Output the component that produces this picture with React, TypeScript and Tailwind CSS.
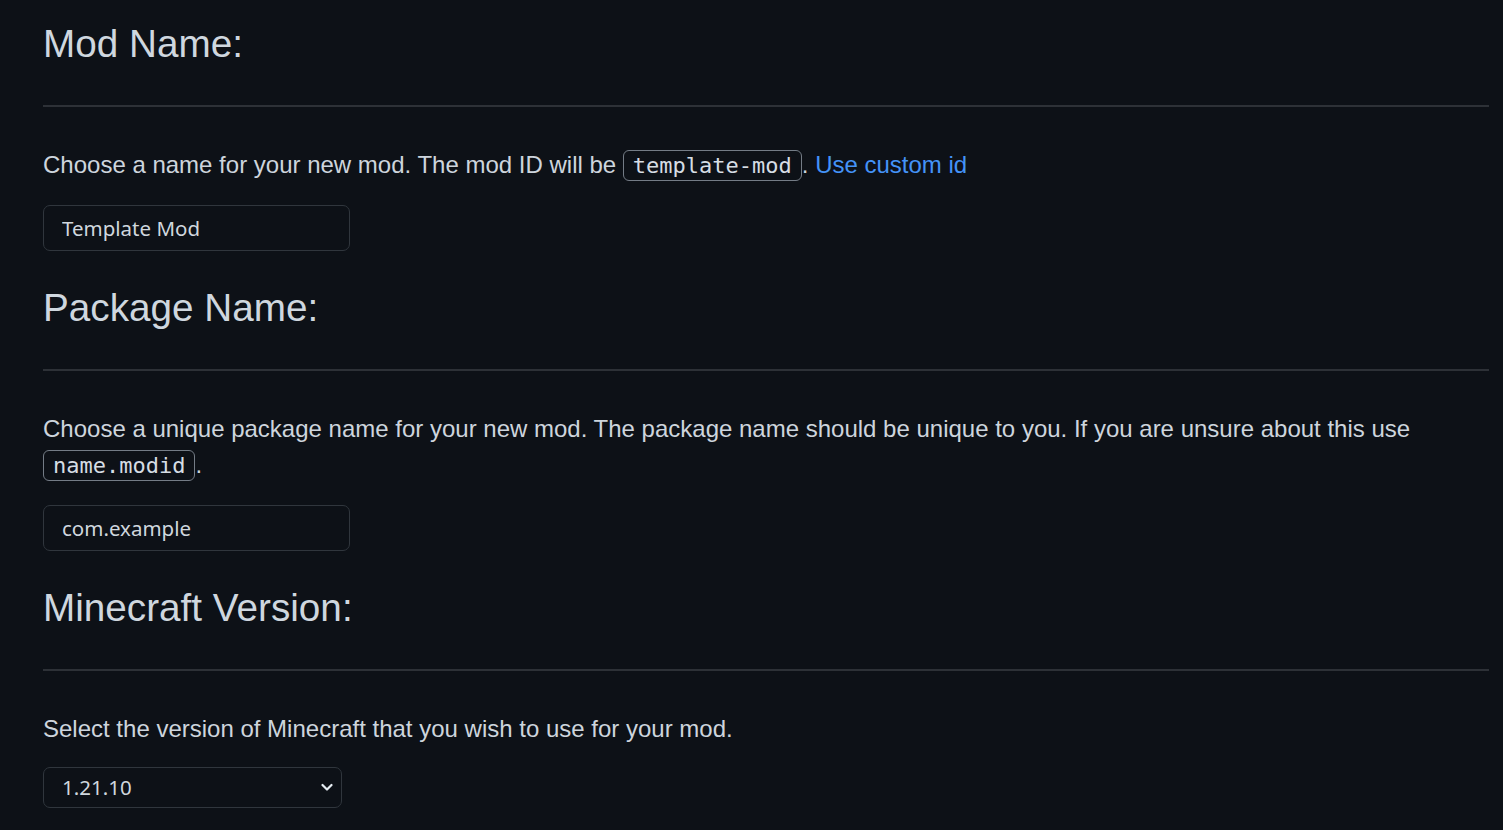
import React from 'react'

const sans = "font-['Liberation_Sans',Arial,sans-serif]"
const field = "font-['Noto_Sans',sans-serif]"

function Code({ children }: { children: React.ReactNode }) {
  return (
    <code className="inline-block rounded-[6px] border border-[#747c86] px-[9px] pt-[4px] pb-[3px] font-['DejaVu_Sans_Mono',monospace] text-[22px] leading-[22px] text-[#d6dde4]">
      {children}
    </code>
  )
}

function Heading({ children, first }: { children: React.ReactNode; first?: boolean }) {
  return (
    <h2
      className={`${first ? '' : 'mt-[33px]'} border-b-2 border-[#2d3137] pb-[37px] text-[38.7px] leading-[48px] font-normal text-[#cfd7df]`}
    >
      {children}
    </h2>
  )
}

export default function App() {
  return (
    <div className={`min-h-screen bg-[#0d1117] pt-[20px] pl-[43px] pr-[14px] pb-6 ${sans} text-[#cdd5dd]`}>
      {/* mod name */}
      <Heading first>Mod Name:</Heading>
      <p className="mt-[40px] text-[24px] leading-[36px]">
        Choose a name for your new mod. The mod ID will be <Code>template-mod</Code>.{' '}
        <a href="#" className="text-[#4493f8]">
          Use custom id
        </a>
      </p>
      <input
        defaultValue="Template Mod"
        className={`mt-[22px] block h-[46px] w-[307px] rounded-[7px] border border-[#30363d] bg-[#0d1117] px-[18px] ${field} text-[20.5px] text-[#d0d7de] outline-none`}
      />

      {/* package */}
      <Heading>Package Name:</Heading>
      <p className="mt-[40px] text-[24px] leading-[36px]">
        Choose a unique package name for your new mod. The package name should be unique to you. If you are unsure about
        this use <Code>name.modid</Code>.
      </p>
      <input
        defaultValue="com.example"
        className={`mt-[22px] block h-[46px] w-[307px] rounded-[7px] border border-[#30363d] bg-[#0d1117] px-[18px] ${field} text-[20.5px] text-[#d0d7de] outline-none`}
      />

      {/* version */}
      <Heading>Minecraft Version:</Heading>
      <p className="mt-[40px] text-[24px] leading-[36px]">Select the version of Minecraft that you wish to use for your mod.</p>
      <div className="relative mt-[20px] w-[299px]">
        <select
          defaultValue="1.21.10"
          className={`block h-[41px] w-full appearance-none rounded-[7px] border border-[#30363d] bg-[#0d1117] px-[18px] ${field} text-[20.5px] text-[#d0d7de] outline-none`}
        >
          <option>1.21.10</option>
          <option>1.21.9</option>
          <option>1.21.8</option>
        </select>
        <svg
          className="pointer-events-none absolute right-[9px] top-[16px]"
          width="12"
          height="9"
          viewBox="0 0 12 9"
          fill="none"
        >
          <path d="M1.5 2 L6 6.5 L10.5 2" stroke="#e6edf3" strokeWidth="2.2" strokeLinecap="round" strokeLinejoin="round" />
        </svg>
      </div>
    </div>
  )
}
